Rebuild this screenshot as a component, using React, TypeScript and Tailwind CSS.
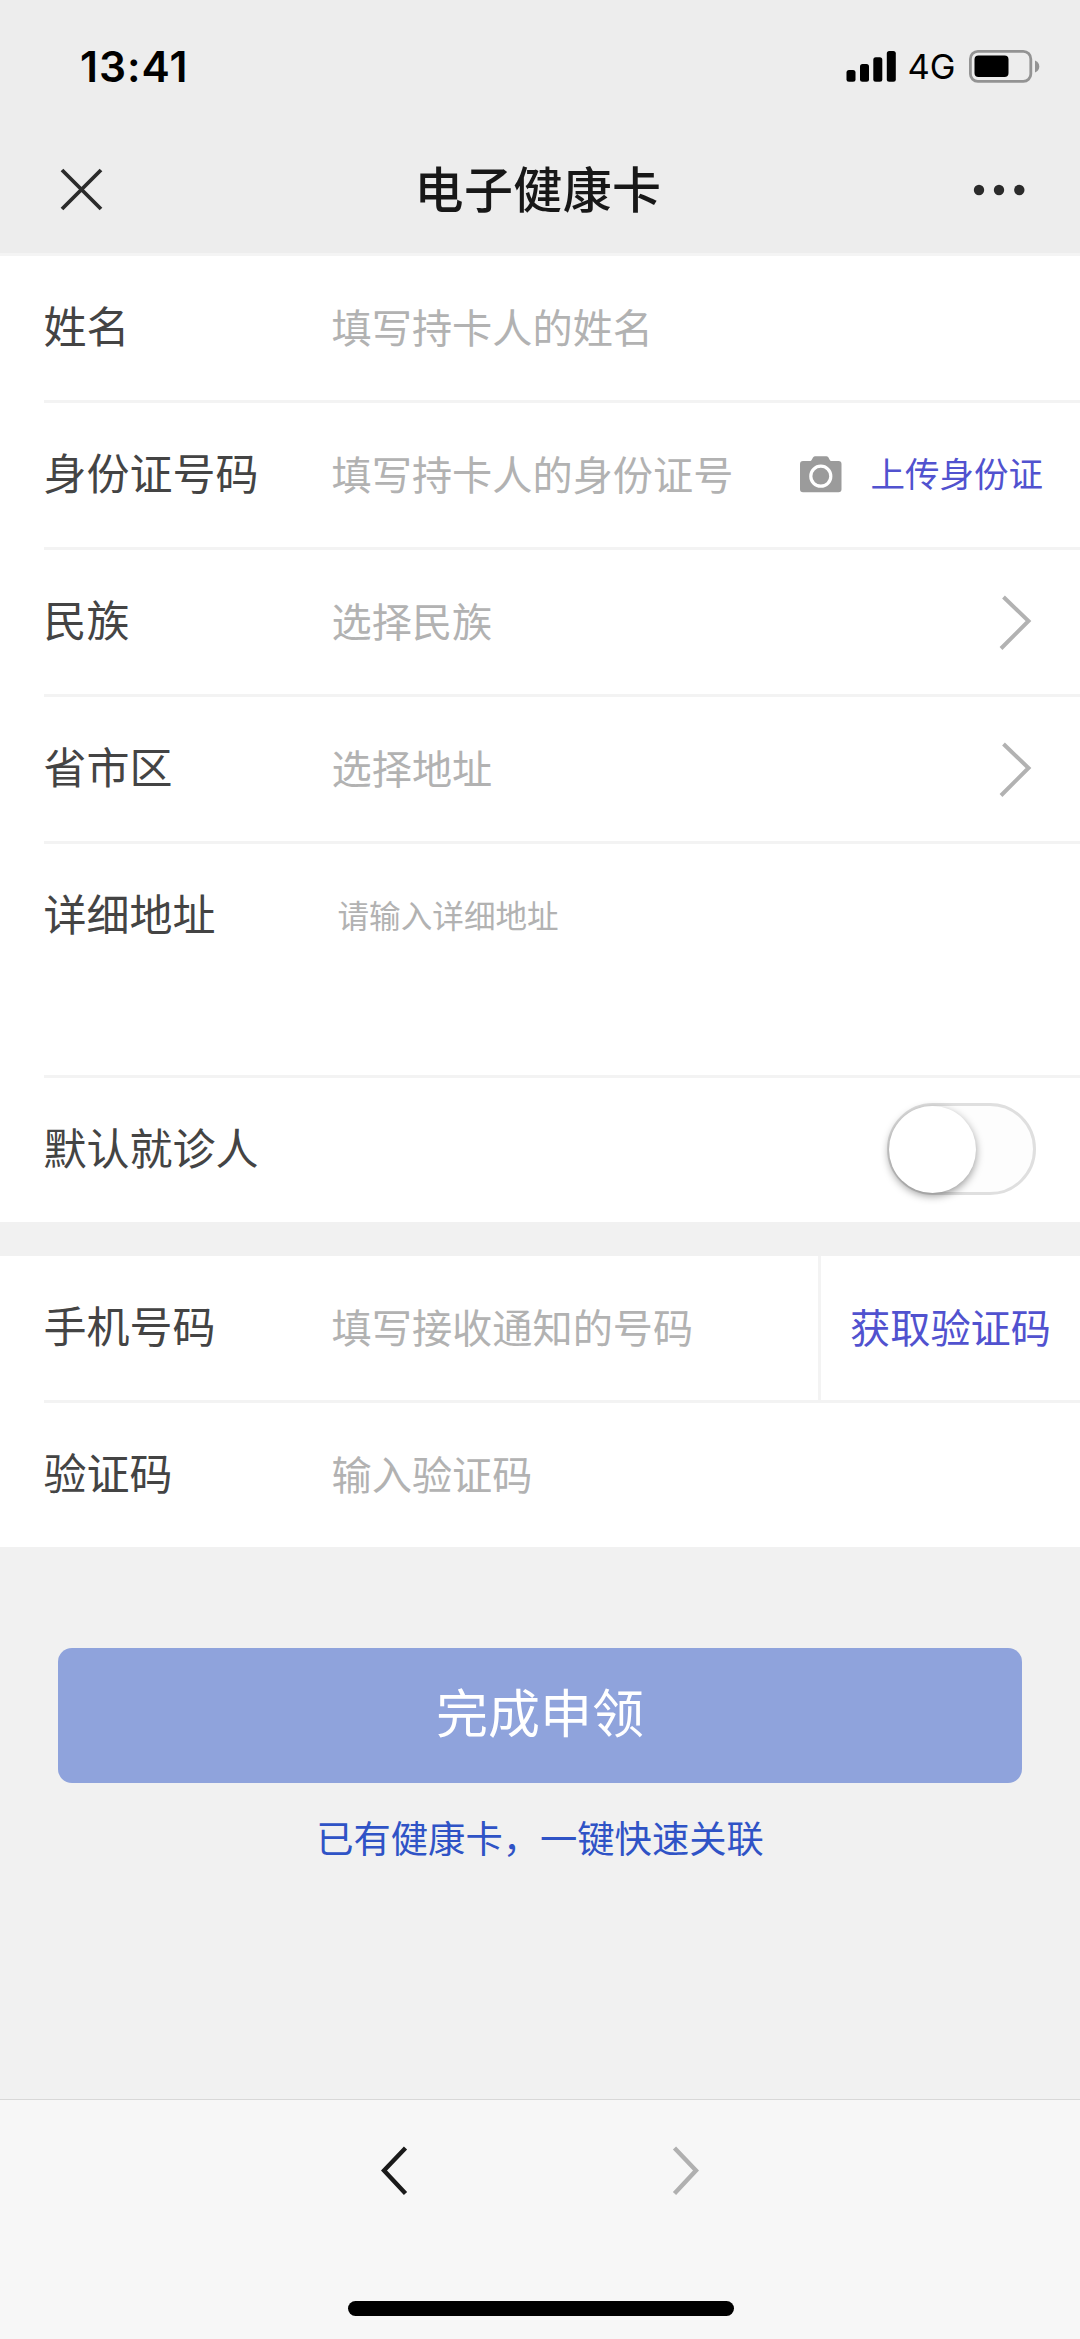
import type { ReactNode } from 'react';
import clsx from 'clsx';

type FieldProps = {
  label: string;
  placeholder?: string;
  isLast?: boolean;
  isMultiline?: boolean;
  children?: ReactNode;
};

const StatusBar = () => (
  <div className="flex h-[130px] items-start justify-between pt-[40px] pl-[80px] pr-[39.5px] text-black">
    <span className="pt-px font-[Inter,sans-serif] text-[42.5px] leading-[52px] font-semibold tracking-[1px]">13:41</span>
    <div className="flex h-[52px] items-center">
      <svg width="52" height="52" viewBox="0 0 52 52">
        <rect x="0.5" y="30" width="9" height="11.7" rx="2.5" />
        <rect x="14" y="24" width="9" height="17.7" rx="2.5" />
        <rect x="27.3" y="17.3" width="9" height="24.4" rx="2.5" />
        <rect x="40.8" y="11" width="9" height="30.7" rx="2.5" />
      </svg>
      <span className="ml-[10px] w-[61px] pt-[2px] font-[Inter,sans-serif] text-[34.5px] leading-[52px]">4G</span>
      <svg width="72" height="52" viewBox="0 0 72 52">
        <rect x="1.4" y="11.4" width="60.4" height="30" rx="7.5" fill="none" stroke="#939393" strokeWidth="2.8" />
        <rect x="5.5" y="15.5" width="34" height="21.5" rx="4" />
        <path d="M66 20.5c2.6 1 4.3 3.3 4.3 6s-1.7 5-4.3 6z" fill="#939393" />
      </svg>
    </div>
  </div>
);

const TitleBar = () => (
  <div className="flex h-[123px] items-center justify-between px-[60px] pb-[4px]">
    <svg width="43" height="43" viewBox="0 0 43 43" stroke="#2b2b2b" strokeWidth="3.8">
      <path d="M2 2l39 39M41 2L2 41" />
    </svg>
    <h1 className="pb-[5px] text-[49px] leading-[70px] font-medium tracking-[0.4px] text-[#181818]">电子健康卡</h1>
    <svg className="-mr-[5px]" width="52" height="12" viewBox="0 0 52 12" fill="#2b2b2b">
      <circle cx="6" cy="6" r="5.2" />
      <circle cx="26" cy="6" r="5.2" />
      <circle cx="46.3" cy="6" r="5.2" />
    </svg>
  </div>
);

const Field = ({ label, placeholder, isLast = false, isMultiline = false, children }: FieldProps) => (
  <div
    className={clsx(
      'ml-[43.5px] flex',
      isMultiline ? 'h-[233.5px]' : isLast ? 'h-[144px]' : 'h-[147px]',
      !isLast && 'border-b-[3px] border-[#f3f3f3]',
    )}
  >
    <label className="w-[288px] text-[43px] leading-[137px] text-[#444]">{label}</label>
    {placeholder && (
      <span
        className={clsx(
          'text-[#b2b2b2]',
          isMultiline ? 'pl-[6px] text-[31.6px] leading-[140px]' : 'text-[40.2px] leading-[139px]',
        )}
      >
        {placeholder}
      </span>
    )}
    {children && <div className="ml-auto flex items-center">{children}</div>}
  </div>
);

const CameraIcon = () => (
  <svg width="42" height="38" viewBox="0 0 42 38">
    <path
      d="M3 5h7.5c1.5 0 2-4.8 4.5-4.8h11.5c2.5 0 3 4.8 4.5 4.8h7.5a3 3 0 0 1 3 3v25.2a3 3 0 0 1-3 3H3a3 3 0 0 1-3-3V8a3 3 0 0 1 3-3z"
      fill="#9b9b9b"
    />
    <circle cx="20.8" cy="20.2" r="10" fill="none" stroke="#fff" strokeWidth="3.2" />
  </svg>
);

const ArrowRight = () => (
  <svg className="mr-[48px]" width="34" height="58" viewBox="0 0 34 58" fill="none">
    <path d="M5.5 4L30.5 28L3 55.5" stroke="#b2b2b2" strokeWidth="4" />
  </svg>
);

const Switch = () => (
  <button
    role="switch"
    aria-checked={false}
    className="mr-[44px] mb-[1px] flex h-[92px] w-[149px] items-center rounded-full border-[3px] border-[#dfdfdf] bg-[#fdfdfd]"
  >
    <span className="-ml-[1px] size-[87px] shrink-0 rounded-full bg-white shadow-[0_3px_9px_rgba(0,0,0,0.4)]" />
  </button>
);

const BottomBar = () => (
  <div className="flex h-[240px] flex-col items-center border-t border-[#d8d8d8] bg-[#f7f7f7] pt-[44px]">
    <div className="flex gap-[262px]">
      <svg width="28" height="54" viewBox="0 0 28 54" fill="none">
        <path d="M24.5 4L3 26.5L24.5 49.5" stroke="#1a1a1a" strokeWidth="4.4" />
      </svg>
      <svg width="28" height="54" viewBox="0 0 28 54" fill="none">
        <path d="M3.5 4L25 26.5L3.5 49.5" stroke="#b0b0b0" strokeWidth="4.4" />
      </svg>
    </div>
    <div className="mt-[103px] ml-px h-[15px] w-[386px] rounded-full bg-black" />
  </div>
);

const App = () => (
  <div className="flex h-[2339px] w-[1080px] flex-col overflow-hidden bg-[#f1f1f1] font-['Noto_Sans_CJK_SC',sans-serif]">
    <header className="h-[256px] border-b-[3px] border-[#f4f4f4] bg-[#ededed]">
      <StatusBar />
      <TitleBar />
    </header>

    <section className="bg-white">
      <Field label="姓名" placeholder="填写持卡人的姓名" />
      <Field label="身份证号码" placeholder="填写持卡人的身份证号">
        <CameraIcon />
        <button className="mr-[37px] ml-[29px] pb-[4px] text-[34.5px] text-[#5152cf]">上传身份证</button>
      </Field>
      <Field label="民族" placeholder="选择民族">
        <ArrowRight />
      </Field>
      <Field label="省市区" placeholder="选择地址">
        <ArrowRight />
      </Field>
      <Field label="详细地址" placeholder="请输入详细地址" isMultiline />
      <Field label="默认就诊人" isLast>
        <Switch />
      </Field>
    </section>

    <section className="mt-[34.5px] bg-white">
      <Field label="手机号码" placeholder="填写接收通知的号码">
        <button className="h-[144px] w-[262px] border-l-[3px] border-[#f3f3f3] pb-[4px] pl-[29px] text-left text-[40.2px] text-[#5152cf]">
          获取验证码
        </button>
      </Field>
      <Field label="验证码" placeholder="输入验证码" isLast />
    </section>

    <div className="flex flex-1 flex-col items-center px-[58px] pt-[101px]">
      <button className="h-[135px] w-full rounded-[14px] bg-[#8fa3dc] pb-[9px] text-[52px] text-white">完成申领</button>
      <a className="mt-[26px] text-[37.3px] leading-[56px] text-[#2f53c6]">已有健康卡，一键快速关联</a>
    </div>

    <BottomBar />
  </div>
);

export default App;
